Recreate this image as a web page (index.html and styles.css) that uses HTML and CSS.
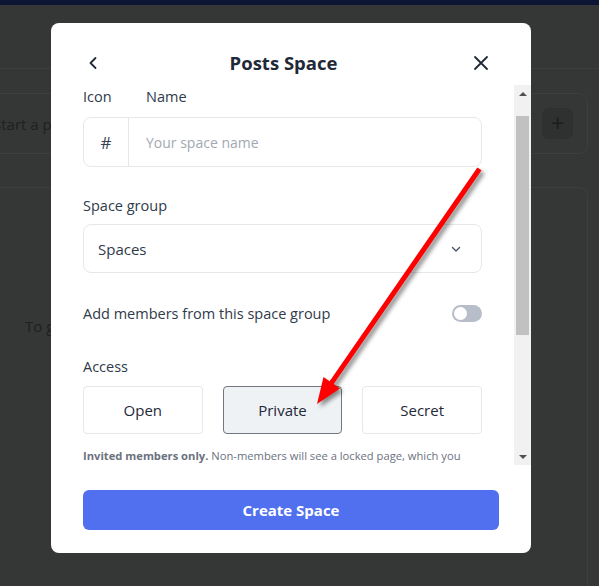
FILE: index.html
```html
<!DOCTYPE html>
<html lang="en">
<head>
<meta charset="utf-8">
<title>Posts Space</title>
<link rel="stylesheet" href="styles.css">
</head>
<body>
<div class="page">
  <div class="topbar"></div>
  <div class="pagehead"></div>
  <div class="pagebody">
    <div class="card composer">
      <span class="composer-text">Start a post</span>
      <span class="plus-btn">+</span>
    </div>
    <div class="card feed">
      <p class="feed-text">To get started</p>
    </div>
  </div>
</div>

<div class="overlay">
  <div class="modal">
    <div class="modal-head">
      <span class="icon-btn">
        <svg width="24" height="24" viewBox="0 0 24 24"><path d="M14.5 7 L9.5 12 L14.5 17" fill="none" stroke="#1f2937" stroke-width="1.8" stroke-linecap="round" stroke-linejoin="round"/></svg>
      </span>
      <h2 class="title">Posts Space</h2>
      <span class="icon-btn">
        <svg width="24" height="24" viewBox="0 0 24 24"><path d="M6 6 L18 18 M18 6 L6 18" fill="none" stroke="#1f2937" stroke-width="1.8" stroke-linecap="round"/></svg>
      </span>
    </div>

    <div class="modal-body">
      <div class="scroll-content">
        <div class="field-labels">
          <span class="lbl-icon">Icon</span>
          <span>Name</span>
        </div>
        <div class="name-input">
          <span class="hash">#</span>
          <span class="placeholder">Your space name</span>
        </div>

        <div class="section-label group-label">Space group</div>
        <div class="select">
          <span>Spaces</span>
          <svg width="12" height="12" viewBox="0 0 12 12"><path d="M2.5 4.5 L6 8 L9.5 4.5" fill="none" stroke="#4b5563" stroke-width="1.4" stroke-linecap="round" stroke-linejoin="round"/></svg>
        </div>

        <div class="toggle-row">
          <span>Add members from this space group</span>
          <span class="toggle"><span class="knob"></span></span>
        </div>

        <div class="section-label access-label">Access</div>
        <div class="access-options">
          <span class="opt">Open</span>
          <span class="opt opt-active">Private</span>
          <span class="opt">Secret</span>
        </div>
        <p class="help"><b>Invited members only.</b> Non-members will see a locked page, which you</p>
      </div>
      <div class="scrollbar">
        <span class="sb-btn"><span class="tri-up"></span></span>
        <span class="sb-track"><span class="sb-thumb"></span></span>
        <span class="sb-btn"><span class="tri-down"></span></span>
      </div>
    </div>

    <div class="modal-foot">
      <button class="create-btn">Create Space</button>
    </div>
  </div>
</div>

<svg class="annotation" width="599" height="586" viewBox="0 0 599 586">
  <g class="arrow">
    <line x1="478" y1="171" x2="330" y2="385" stroke="#ff0000" stroke-width="5" stroke-linecap="square"/>
    <polygon points="317,404 340,388.5 323.5,377" fill="#ff0000"/>
  </g>
</svg>
</body>
</html>
```

FILE: styles.css
```css
* { box-sizing: border-box; }

html, body {
  margin: 0;
  padding: 0;
  width: 599px;
  height: 586px;
  overflow: hidden;
}

body {
  background: #353636;
  font-family: "Open Sans", "Noto Sans", sans-serif;
  position: relative;
}

/* background page (dimmed) */
.topbar {
  height: 5px;
  background: #0d1534;
}
.pagehead {
  height: 64px;
  border-bottom: 1px solid #3c3d3d;
}
.pagebody {
  padding: 24px 11px 0 0;
  margin-left: -40px;
}
.card {
  border: 1px solid #3d3e3e;
  border-radius: 9px;
}
.composer {
  height: 61px;
  display: flex;
  align-items: center;
  justify-content: space-between;
  padding: 0 14px 0 32px;
}
.composer-text {
  font-size: 15px;
  color: #1f2020;
}
.plus-btn {
  width: 31px;
  height: 31px;
  border-radius: 7px;
  background: #2f3030;
  color: #1c1c1c;
  font-size: 24px;
  line-height: 29px;
  text-align: center;
}
.feed {
  margin-top: 33px;
  height: 420px;
  padding: 128px 0 0 64px;
}
.feed-text {
  margin: 0;
  font-size: 15px;
  color: #1f2020;
}

/* modal */
.overlay {
  position: absolute;
  inset: 0;
  padding: 23px 0 0 51px;
}
.modal {
  width: 480px;
  height: 530px;
  background: #ffffff;
  border-radius: 8px;
  display: flex;
  flex-direction: column;
  overflow: hidden;
}
.modal-head {
  height: 62px;
  padding: 18px 38px 0 30px;
  display: flex;
  align-items: center;
}
.icon-btn {
  width: 24px;
  height: 24px;
  display: flex;
}
.title {
  flex: 1;
  margin: 0;
  padding-right: 7px;
  text-align: center;
  font-size: 18.5px;
  font-weight: 700;
  color: #1f2937;
  line-height: 44px;
}

.modal-body {
  height: 380px;
  display: flex;
}
.scroll-content {
  flex: 1;
  overflow: hidden;
  padding: 0 32px;
  font-size: 14.5px;
  color: #2f3a4a;
}
.field-labels {
  display: flex;
  height: 24px;
  line-height: 24px;
}
.lbl-icon { width: 63px; }

.name-input {
  margin-top: 8px;
  height: 50px;
  border: 1px solid #e5e7eb;
  border-radius: 8px;
  display: flex;
  align-items: center;
}
.hash {
  width: 45px;
  height: 100%;
  border-right: 1px solid #e5e7eb;
  display: flex;
  align-items: center;
  justify-content: center;
  font-size: 17px;
  color: #374151;
}
.placeholder {
  padding-left: 17px;
  font-size: 14px;
  color: #a3a8b1;
}

.section-label {
  height: 24px;
  line-height: 24px;
}
.group-label { margin-top: 27px; }

.select {
  margin-top: 6px;
  height: 49px;
  border: 1px solid #e5e7eb;
  border-radius: 8px;
  display: flex;
  align-items: center;
  justify-content: space-between;
  padding: 0 19px 0 14px;
  font-size: 15px;
  color: #2f3a4a;
}

.toggle-row {
  margin-top: 28px;
  height: 24px;
  display: flex;
  align-items: center;
  justify-content: space-between;
}
.toggle {
  width: 30px;
  height: 17px;
  border-radius: 9px;
  background: #b8bec9;
  display: flex;
  align-items: center;
  padding-left: 2px;
}
.knob {
  width: 13px;
  height: 13px;
  border-radius: 50%;
  background: #ffffff;
}

.access-label { margin-top: 30px; }
.access-options {
  margin-top: 7px;
  height: 48px;
  display: grid;
  grid-template-columns: repeat(3, 1fr);
  gap: 20px;
}
.opt {
  border: 1px solid #e5e7eb;
  border-radius: 4px;
  display: flex;
  align-items: center;
  justify-content: center;
  font-size: 15px;
  color: #1f2937;
}
.opt-active {
  background: #eff2f5;
  border-color: #71767f;
}
.help {
  margin: 13px 0 0;
  font-size: 11.2px;
  line-height: 18px;
  color: #6b7280;
  white-space: nowrap;
}
.help b { font-weight: 700; }

.scrollbar {
  width: 17px;
  background: #f1f1f1;
  display: flex;
  flex-direction: column;
}
.sb-btn {
  height: 17px;
  display: flex;
  align-items: center;
  justify-content: center;
}
.tri-up, .tri-down {
  width: 0;
  height: 0;
  border-left: 4px solid transparent;
  border-right: 4px solid transparent;
}
.tri-up { border-bottom: 4px solid #505050; }
.tri-down { border-top: 4px solid #505050; }
.sb-track {
  flex: 1;
  padding: 14px 2px 0;
}
.sb-thumb {
  display: block;
  height: 219px;
  background: #c1c1c1;
}

.modal-foot {
  padding: 25px 32px 23px;
}
.create-btn {
  display: block;
  width: 100%;
  height: 40px;
  border: 0;
  border-radius: 6px;
  background: #5170f0;
  color: #ffffff;
  font-family: "Open Sans", "Noto Sans", sans-serif;
  font-size: 15px;
  font-weight: 700;
}

/* red annotation arrow */
.annotation {
  position: absolute;
  left: 0;
  top: 0;
  pointer-events: none;
}
.arrow {
  filter: drop-shadow(3px 3px 2px rgba(0, 0, 0, 0.45));
}
```
